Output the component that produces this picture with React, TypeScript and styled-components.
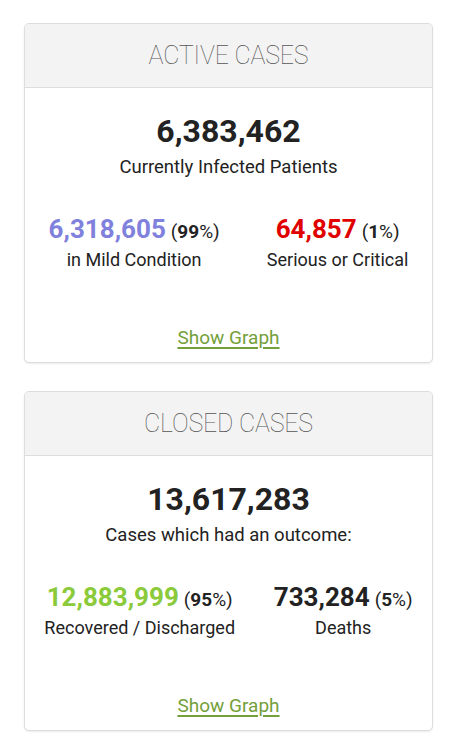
import React from "react";
import styled, { createGlobalStyle } from "styled-components";

const Global = createGlobalStyle`
  html, body { margin: 0; padding: 0; background: #ffffff; }
  body { font-family: Roboto, "Noto Sans", "Liberation Sans", sans-serif; color: #222; }
`;

const Page = styled.div`
  display: flex;
  flex-direction: column;
  gap: 28px;
  padding: 23px 27px 20px 24px;
`;

const Card = styled.section`
  border: 1px solid #dddddd;
  border-radius: 5px;
  background: #fff;
  box-shadow: 0 1px 2px rgba(0, 0, 0, 0.08);
  overflow: hidden;
`;

const Header = styled.header`
  height: 63px;
  background: #f3f3f3;
  border-bottom: 1px solid #dddddd;
  display: flex;
  align-items: center;
  justify-content: center;
  font-weight: 100;
  font-size: 25px;
  color: #555;
  letter-spacing: -0.2px;
`;

const Body = styled.div`
  display: flex;
  flex-direction: column;
  align-items: center;
  padding: 24px 0 12px;
`;

const MainNumber = styled.div`
  font-size: 32px;
  font-weight: 700;
  line-height: 38px;
  color: #222;
`;

const MainLabel = styled.div`
  font-size: 18.5px;
  line-height: 24px;
  margin-top: 5px;
  color: #222;
`;

const Split = styled.div`
  align-self: stretch;
  display: flex;
  justify-content: space-around;
  margin-top: 34px;
`;

const Stat = styled.div`
  display: flex;
  flex-direction: column;
  align-items: center;
`;

const StatLine = styled.div`
  display: flex;
  align-items: baseline;
  gap: 5px;
  line-height: 32px;
`;

const StatNumber = styled.span<{ $color: string }>`
  font-size: 26px;
  font-weight: 700;
  color: ${(p) => p.$color};
`;

const Percent = styled.span`
  font-size: 19px;
  color: #222;
  & strong { font-weight: 700; }
`;

const StatLabel = styled.div`
  font-size: 18px;
  line-height: 24px;
  color: #222;
`;

const GraphLink = styled.a`
  margin-top: 54px;
  font-size: 19px;
  line-height: 24px;
  color: #74a03a;
  text-decoration: underline;
  text-decoration-thickness: 1.5px;
  text-underline-offset: 3px;
  cursor: pointer;
`;

type StatItem = { value: string; pct: string; label: string; color: string };

const CaseCard = ({
  title,
  total,
  totalLabel,
  stats,
}: {
  title: string;
  total: string;
  totalLabel: string;
  stats: StatItem[];
}) => (
  <Card>
    <Header>{title}</Header>
    <Body>
      <MainNumber>{total}</MainNumber>
      <MainLabel>{totalLabel}</MainLabel>
      <Split>
        {stats.map((s) => (
          <Stat key={s.label}>
            <StatLine>
              <StatNumber $color={s.color}>{s.value}</StatNumber>
              <Percent>
                (<strong>{s.pct}</strong>%)
              </Percent>
            </StatLine>
            <StatLabel>{s.label}</StatLabel>
          </Stat>
        ))}
      </Split>
      <GraphLink>Show Graph</GraphLink>
    </Body>
  </Card>
);

export default function App() {
  return (
    <>
      <Global />
      <Page>
        <CaseCard
          title="ACTIVE CASES"
          total="6,383,462"
          totalLabel="Currently Infected Patients"
          stats={[
            { value: "6,318,605", pct: "99", label: "in Mild Condition", color: "#8080dd" },
            { value: "64,857", pct: "1", label: "Serious or Critical", color: "#e00000" },
          ]}
        />
        <CaseCard
          title="CLOSED CASES"
          total="13,617,283"
          totalLabel="Cases which had an outcome:"
          stats={[
            { value: "12,883,999", pct: "95", label: "Recovered / Discharged", color: "#8aca3b" },
            { value: "733,284", pct: "5", label: "Deaths", color: "#222222" },
          ]}
        />
      </Page>
    </>
  );
}
